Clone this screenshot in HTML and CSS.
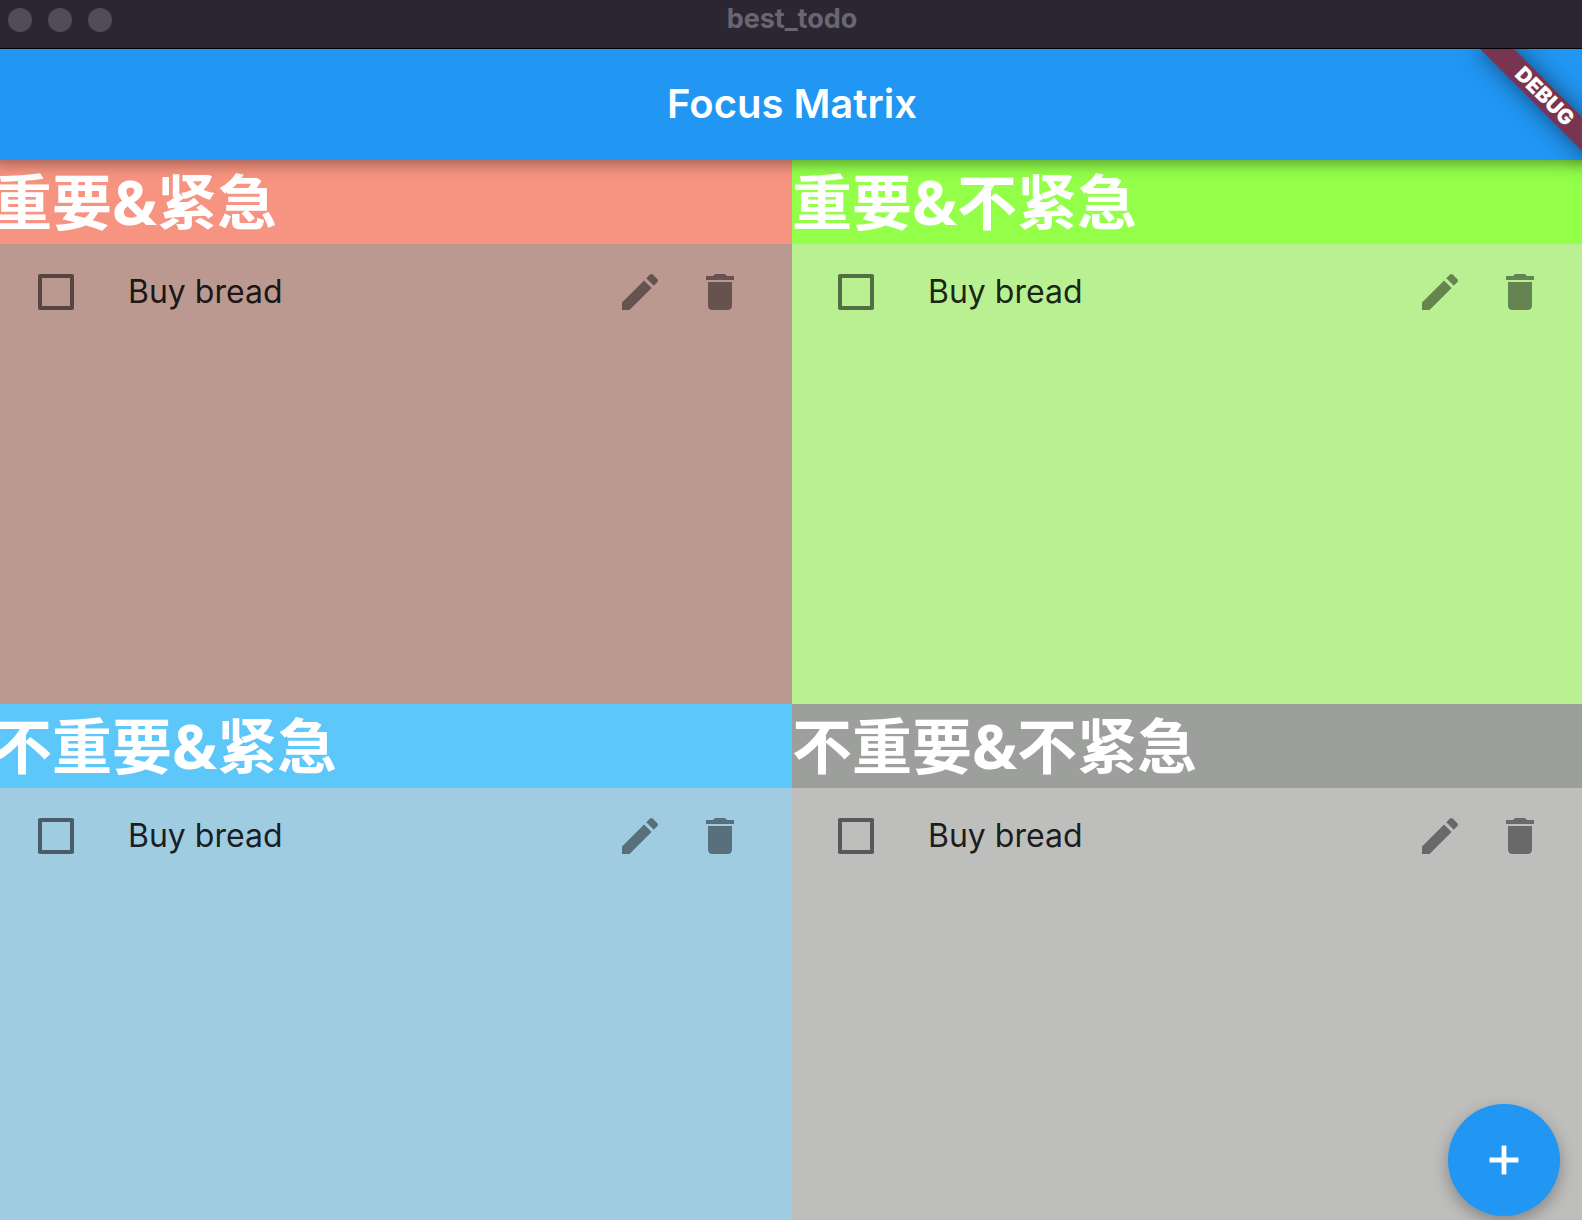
FILE: index.html
```html
<!DOCTYPE html>
<html lang="zh-CN">
<head>
<meta charset="utf-8">
<meta name="viewport" content="width=device-width, initial-scale=1">
<title>best_todo</title>
<link rel="stylesheet" href="styles.css">
</head>
<body>
<svg class="sprite" aria-hidden="true">
  <symbol id="icon-edit" viewBox="0 0 24 24"><path d="M3 17.25V21h3.75L17.81 9.94l-3.75-3.75L3 17.25zM20.71 7.04c.39-.39.39-1.02 0-1.41l-2.34-2.34c-.39-.39-1.02-.39-1.41 0l-1.83 1.83 3.75 3.75 1.83-1.83z"/></symbol>
  <symbol id="icon-delete" viewBox="0 0 24 24"><path d="M6 19c0 1.1.9 2 2 2h8c1.1 0 2-.9 2-2V7H6v12zM19 4h-3.500l-1-1h-5l-1 1H5v2h14V4z"/></symbol>
  <symbol id="icon-add" viewBox="0 0 24 24"><path d="M19.200 13.200h-6v6h-2.400v-6h-6v-2.400h6v-6h2.400v6h6z"/></symbol>
</svg>
<div class="window">
  <header class="titlebar">
    <div class="lights"><span class="light"></span><span class="light"></span><span class="light"></span></div>
    <span class="window-title">best_todo</span>
  </header>
  <div class="view">
    <div class="appbar"><h1 class="appbar-title">Focus Matrix</h1></div>
    <main class="matrix">
      <section class="quadrant red">
        <h2 class="quadrant-title">重要&amp;紧急</h2>
        <ul class="tasks">
          <li class="task">
            <input class="check" type="checkbox" id="task-1">
            <label class="label" for="task-1">Buy bread</label>
            <button class="action" type="button" aria-label="Edit"><svg class="icon"><use href="#icon-edit"/></svg></button>
            <button class="action" type="button" aria-label="Delete"><svg class="icon"><use href="#icon-delete"/></svg></button>
          </li>
        </ul>
      </section>
      <section class="quadrant green">
        <h2 class="quadrant-title">重要&amp;不紧急</h2>
        <ul class="tasks">
          <li class="task">
            <input class="check" type="checkbox" id="task-2">
            <label class="label" for="task-2">Buy bread</label>
            <button class="action" type="button" aria-label="Edit"><svg class="icon"><use href="#icon-edit"/></svg></button>
            <button class="action" type="button" aria-label="Delete"><svg class="icon"><use href="#icon-delete"/></svg></button>
          </li>
        </ul>
      </section>
      <section class="quadrant blue">
        <h2 class="quadrant-title">不重要&amp;紧急</h2>
        <ul class="tasks">
          <li class="task">
            <input class="check" type="checkbox" id="task-3">
            <label class="label" for="task-3">Buy bread</label>
            <button class="action" type="button" aria-label="Edit"><svg class="icon"><use href="#icon-edit"/></svg></button>
            <button class="action" type="button" aria-label="Delete"><svg class="icon"><use href="#icon-delete"/></svg></button>
          </li>
        </ul>
      </section>
      <section class="quadrant grey">
        <h2 class="quadrant-title">不重要&amp;不紧急</h2>
        <ul class="tasks">
          <li class="task">
            <input class="check" type="checkbox" id="task-4">
            <label class="label" for="task-4">Buy bread</label>
            <button class="action" type="button" aria-label="Edit"><svg class="icon"><use href="#icon-edit"/></svg></button>
            <button class="action" type="button" aria-label="Delete"><svg class="icon"><use href="#icon-delete"/></svg></button>
          </li>
        </ul>
      </section>
    </main>
    <div class="banner">DEBUG</div>
    <button class="fab" type="button" aria-label="Add"><svg class="icon"><use href="#icon-add"/></svg></button>
  </div>
</div>
</body>
</html>
```

FILE: styles.css
```css
* {
  box-sizing: border-box;
}

body {
  margin: 0;
  height: 100vh;
  overflow: hidden;
  font-family: Inter, "Noto Sans CJK SC", sans-serif;
}

.sprite {
  display: none;
}

/* The window runs slightly past the left, right and bottom screen edges. */
.window {
  display: flex;
  flex-direction: column;
  height: calc(100vh + 28px);
  margin: 0 -10px 0 -8px;
}

.titlebar {
  display: grid;
  grid-template-columns: 1fr auto 1fr;
  align-items: center;
  height: 49px;
  padding: 0 16px 8px;
  background: #2b2732;
  border-bottom: 1px solid #000;
}

.lights {
  display: flex;
  gap: 16px;
}

.light {
  width: 24px;
  height: 24px;
  border-radius: 50%;
  background: #514c58;
}

.window-title {
  padding-bottom: 2px;
  color: #6a6572;
  font-size: 27px;
  font-weight: 700;
  line-height: 32px;
}

.view {
  position: relative;
  flex: 1;
  display: flex;
  flex-direction: column;
  overflow: hidden;
}

.appbar {
  position: relative;
  z-index: 1;
  display: flex;
  align-items: center;
  justify-content: center;
  height: 111px;
  padding-bottom: 2px;
  background: #2196f3;
  box-shadow: 0 2px 16px rgba(0, 0, 0, 0.45);
}

.appbar-title {
  margin: 0;
  color: #fff;
  font-size: 40px;
  font-weight: 600;
  line-height: 48px;
}

.matrix {
  flex: 1;
  display: grid;
  grid-template-columns: 1fr 1fr;
  grid-template-rows: 1fr 1fr;
}

.quadrant-title {
  margin: 0;
  color: #fff;
  font-family: "Open Sans", "Noto Sans CJK SC", sans-serif;
  font-size: 60px;
  font-weight: 700;
  line-height: 84px;
  white-space: nowrap;
}

.red { background: #bb9890; }
.red .quadrant-title { background: #f79481; }
.green { background: #b8f092; }
.green .quadrant-title { background: #93ff49; }
.blue { background: #a0cce2; }
.blue .quadrant-title { background: #5dc7fa; }
.grey { background: #bebfbd; }
.grey .quadrant-title { background: #9d9f9c; }

.tasks {
  margin: 0;
  padding: 0;
  list-style: none;
}

.task {
  display: flex;
  align-items: center;
  height: 96px;
  padding: 0 32px 0 46px;
}

.check {
  appearance: none;
  width: 36px;
  height: 36px;
  margin: 0 54px 0 0;
  border: 4px solid rgba(0, 0, 0, 0.54);
  border-radius: 2px;
}

.label {
  flex: 1;
  color: rgba(0, 0, 0, 0.87);
  font-size: 32px;
  line-height: 40px;
}

.action {
  display: flex;
  padding: 16px;
  border: 0;
  background: none;
  color: rgba(0, 0, 0, 0.45);
}

.icon {
  width: 48px;
  height: 48px;
  fill: currentColor;
}

.banner {
  position: absolute;
  z-index: 2;
  top: 55px;
  right: -80px;
  width: 160px;
  height: 24px;
  background: rgba(144, 28, 40, 0.8);
  box-shadow: 0 0 24px rgba(0, 0, 0, 0.5);
  color: #fff;
  font-size: 21px;
  font-weight: 900;
  line-height: 24px;
  text-align: center;
  transform: rotate(45deg);
  transform-origin: 80px -55px;
}

.fab {
  position: absolute;
  z-index: 2;
  right: 32px;
  bottom: 32px;
  display: flex;
  align-items: center;
  justify-content: center;
  width: 112px;
  height: 112px;
  padding: 0;
  border: 0;
  border-radius: 50%;
  background: #2196f3;
  color: #fff;
  box-shadow: 0 6px 16px rgba(0, 0, 0, 0.3);
}
```
